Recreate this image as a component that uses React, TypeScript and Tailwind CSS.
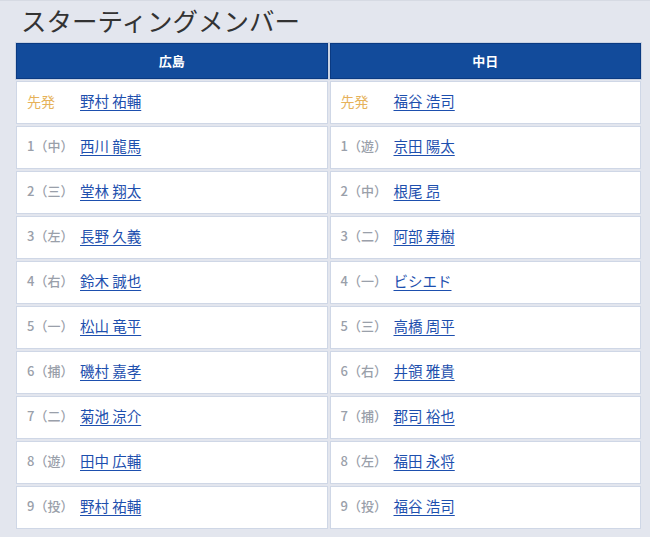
import React from "react";

interface Player {
  pos: string;
  name: string;
}

const carp: Player[] = [
  { pos: "1（中）", name: "西川 龍馬" },
  { pos: "2（三）", name: "堂林 翔太" },
  { pos: "3（左）", name: "長野 久義" },
  { pos: "4（右）", name: "鈴木 誠也" },
  { pos: "5（一）", name: "松山 竜平" },
  { pos: "6（捕）", name: "磯村 嘉孝" },
  { pos: "7（二）", name: "菊池 涼介" },
  { pos: "8（遊）", name: "田中 広輔" },
  { pos: "9（投）", name: "野村 祐輔" },
];

const dragons: Player[] = [
  { pos: "1（遊）", name: "京田 陽太" },
  { pos: "2（中）", name: "根尾 昂" },
  { pos: "3（二）", name: "阿部 寿樹" },
  { pos: "4（一）", name: "ビシエド" },
  { pos: "5（三）", name: "高橋 周平" },
  { pos: "6（右）", name: "井領 雅貴" },
  { pos: "7（捕）", name: "郡司 裕也" },
  { pos: "8（左）", name: "福田 永将" },
  { pos: "9（投）", name: "福谷 浩司" },
];

function Cell({ label, name, starter }: { label: string; name: string; starter?: boolean }) {
  return (
    <div className="h-[43px] bg-white border border-[#cfd7e6] flex items-center pl-[10px] pb-[3px]">
      <span
        className={
          starter
            ? "w-[53px] shrink-0 text-[14px] text-[#e6b25a]"
            : "w-[53px] shrink-0 text-[13px] font-medium text-[#9aa0aa]"
        }
      >
        {label}
      </span>
      <a href="#" className="text-[14.5px] text-[#1d4fae] underline underline-offset-[3px]">
        {name}
      </a>
    </div>
  );
}

export default function App() {
  return (
    <div
      className="w-[650px] h-[537px] bg-[#e3e6ee] overflow-hidden"
      style={{ fontFamily: '"Noto Sans CJK JP", "Noto Sans", sans-serif' }}
    >
      <div className="h-[1px] bg-[#d6dae3]" />
      <h2 className="pl-[21px] pt-[2px] h-[42px] text-[25.5px] leading-[34px] text-[#333]">
        スターティングメンバー
      </h2>
      <div className="mx-[16px] w-[625px] grid grid-cols-2 gap-[2px]">
        <div className="h-[36px] bg-[#124b9b] border border-[#0a3a82] outline outline-1 outline-[#c9d2e2] flex items-center justify-center text-[13px] font-bold text-white">
          広島
        </div>
        <div className="h-[36px] bg-[#124b9b] border border-[#0a3a82] outline outline-1 outline-[#c9d2e2] flex items-center justify-center text-[13px] font-bold text-white">
          中日
        </div>
        <Cell label="先発" name="野村 祐輔" starter />
        <Cell label="先発" name="福谷 浩司" starter />
        {carp.map((p, i) => (
          <React.Fragment key={i}>
            <Cell label={p.pos} name={p.name} />
            <Cell label={dragons[i].pos} name={dragons[i].name} />
          </React.Fragment>
        ))}
      </div>
    </div>
  );
}
